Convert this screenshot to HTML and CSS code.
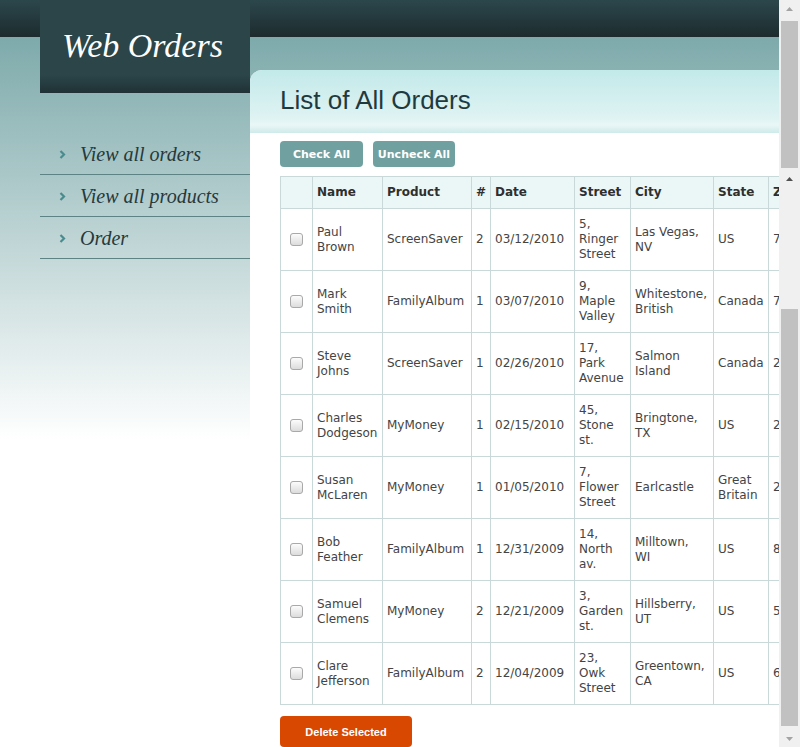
FILE: index.html
```html
<!DOCTYPE html>
<html>
<head>
<meta charset="utf-8">
<title>Web Orders</title>
<link rel="stylesheet" href="styles.css">
</head>
<body>
<div class="window">
  <div class="page">
    <aside class="sidebar">
      <div class="logo">Web Orders</div>
      <nav class="menu">
        <a class="menu-item"><svg class="chev" width="7" height="9" viewBox="0 0 7 9"><polyline points="1.5,1 5,4.5 1.5,8" fill="none" stroke="#4a8c8e" stroke-width="2.2"/></svg><span>View all orders</span></a>
        <a class="menu-item"><svg class="chev" width="7" height="9" viewBox="0 0 7 9"><polyline points="1.5,1 5,4.5 1.5,8" fill="none" stroke="#4a8c8e" stroke-width="2.2"/></svg><span>View all products</span></a>
        <a class="menu-item"><svg class="chev" width="7" height="9" viewBox="0 0 7 9"><polyline points="1.5,1 5,4.5 1.5,8" fill="none" stroke="#4a8c8e" stroke-width="2.2"/></svg><span>Order</span></a>
      </nav>
    </aside>
    <main class="panel">
      <div class="panel-head"><h1>List of All Orders</h1></div>
      <div class="panel-body">
        <div class="actions">
          <button class="btn btn-check">Check All</button>
          <button class="btn btn-uncheck">Uncheck All</button>
        </div>
        <table class="orders">
          <colgroup>
            <col class="c-box"><col class="c-name"><col class="c-prod"><col class="c-num"><col class="c-date"><col class="c-street"><col class="c-city"><col class="c-state"><col class="c-zip"><col class="c-card"><col class="c-cardnum"><col class="c-exp">
          </colgroup>
          <thead>
            <tr><th></th><th>Name</th><th>Product</th><th>#</th><th>Date</th><th>Street</th><th>City</th><th>State</th><th>Zip</th><th>Card</th><th>Card Number</th><th>Exp</th></tr>
          </thead>
          <tbody>
            <tr><td class="box"><input type="checkbox"></td><td>Paul Brown</td><td>ScreenSaver</td><td>2</td><td>03/12/2010</td><td>5, Ringer Street</td><td class="city">Las Vegas, NV</td><td>US</td><td>748</td><td>VISA</td><td>123456789012</td><td>08/12</td></tr>
            <tr><td class="box"><input type="checkbox"></td><td>Mark Smith</td><td>FamilyAlbum</td><td>1</td><td>03/07/2010</td><td>9, Maple Valley</td><td class="city">Whitestone, British</td><td>Canada</td><td>76743</td><td>MasterCard</td><td>770077007700</td><td>07/11</td></tr>
            <tr><td class="box"><input type="checkbox"></td><td>Steve Johns</td><td>ScreenSaver</td><td>1</td><td>02/26/2010</td><td>17, Park Avenue</td><td class="city">Salmon Island</td><td>Canada</td><td>21874</td><td>American Express</td><td>341341341341</td><td>03/11</td></tr>
            <tr><td class="box"><input type="checkbox"></td><td>Charles Dodgeson</td><td>MyMoney</td><td>1</td><td>02/15/2010</td><td>45, Stone st.</td><td class="city">Bringtone, TX</td><td>US</td><td>21445</td><td>MasterCard</td><td>505550555055</td><td>01/11</td></tr>
            <tr><td class="box"><input type="checkbox"></td><td>Susan McLaren</td><td>MyMoney</td><td>1</td><td>01/05/2010</td><td>7, Flower Street</td><td class="city">Earlcastle</td><td>Great Britain</td><td>23424</td><td>MasterCard</td><td>300155554444</td><td>01/12</td></tr>
            <tr><td class="box"><input type="checkbox"></td><td>Bob Feather</td><td>FamilyAlbum</td><td>1</td><td>12/31/2009</td><td>14, North av.</td><td class="city">Milltown, WI</td><td>US</td><td>81650</td><td>VISA</td><td>133395133395</td><td>04/10</td></tr>
            <tr><td class="box"><input type="checkbox"></td><td>Samuel Clemens</td><td>MyMoney</td><td>2</td><td>12/21/2009</td><td>3, Garden st.</td><td class="city">Hillsberry, UT</td><td>US</td><td>57665</td><td>VISA</td><td>800088880000</td><td>12/10</td></tr>
            <tr><td class="box"><input type="checkbox"></td><td>Clare Jefferson</td><td>FamilyAlbum</td><td>2</td><td>12/04/2009</td><td>23, Owk Street</td><td class="city">Greentown, CA</td><td>US</td><td>62658</td><td>American Express</td><td>371449635398</td><td>07/11</td></tr>
          </tbody>
        </table>
        <button class="btn btn-delete">Delete Selected</button>
      </div>
    </main>
  </div>
  <div class="scrollbar">
    <div class="sb-arrow"><svg width="7" height="4" viewBox="0 0 7 4"><polygon points="0,4 3.5,0 7,4" fill="#a3a3a3"/></svg></div>
    <div class="sb-thumb sb-thumb-top"></div>
    <div class="sb-arrow sb-arrow-inner"><svg width="7" height="4" viewBox="0 0 7 4"><polygon points="0,4 3.5,0 7,4" fill="#505050"/></svg></div>
    <div class="sb-track"></div>
    <div class="sb-thumb sb-thumb-main"></div>
    <div class="sb-arrow sb-arrow-down"><svg width="7" height="4" viewBox="0 0 7 4"><polygon points="0,0 3.5,4 7,0" fill="#a3a3a3"/></svg></div>
  </div>
</div>
</body>
</html>
```
FILE: styles.css
```css
html, body {
  margin: 0;
  padding: 0;
  overflow: hidden;
}

.window {
  display: flex;
  width: 800px;
  height: 747px;
}

.page {
  display: flex;
  width: 779px;
  height: 747px;
  overflow: hidden;
  padding-left: 40px;
  box-sizing: border-box;
  flex: none;
  background: linear-gradient(to bottom, #2c474c 0, #1d2b2e 37px, #7eaaab 37px, #ffffff 440px, #ffffff 100%);
}

.sidebar {
  width: 210px;
  flex: none;
}

.logo {
  height: 93px;
  box-sizing: border-box;
  padding: 26px 0 0 22px;
  background: linear-gradient(to bottom, #2b4549 0, #2b4549 75px, #203236 93px);
  color: #ffffff;
  font-family: "Liberation Serif", serif;
  font-style: italic;
  font-size: 34px;
  line-height: 40px;
}

.menu {
  margin-top: 40px;
}

.menu-item {
  display: flex;
  align-items: center;
  box-sizing: border-box;
  height: 42px;
  padding-top: 1px;
  border-bottom: 1px solid #5e8385;
  padding-left: 19px;
  gap: 14px;
  color: #26393c;
  font-family: "Liberation Serif", serif;
  font-style: italic;
  font-size: 20px;
  text-decoration: none;
}

.chev {
  flex: none;
}

.panel {
  flex: 1;
  min-width: 0;
  margin-top: 70px;
  background: #ffffff;
  border-top-left-radius: 12px;
  overflow: hidden;
}

.panel-head {
  height: 63px;
  box-sizing: border-box;
  padding: 15px 0 0 30px;
  background: linear-gradient(to bottom, #c3e9e9 0, #dff3f3 48px, #e9f7f7 55px, #cfeaea 63px);
}

.panel-head h1 {
  margin: 0;
  font-family: "Liberation Sans", Arial, sans-serif;
  font-weight: normal;
  font-size: 26px;
  line-height: 30px;
  color: #1f3a3e;
}

.panel-body {
  padding: 8px 0 0 30px;
}

.actions {
  display: flex;
  gap: 10px;
}

.btn {
  border: none;
  border-radius: 4px;
  color: #ffffff;
  font-family: "DejaVu Sans", Verdana, sans-serif;
  font-weight: bold;
  font-size: 11px;
  padding: 0;
  cursor: pointer;
}

.btn-check, .btn-uncheck {
  height: 26px;
  background: #70a0a0;
}

.btn-check { width: 83px; }
.btn-uncheck { width: 82px; }

.orders {
  margin-top: 9px;
  border-collapse: collapse;
  table-layout: fixed;
  width: 840px;
  font-family: "DejaVu Sans", Verdana, sans-serif;
  font-size: 12px;
  line-height: 15px;
  color: #444444;
}

.c-box { width: 32px; }
.c-name { width: 70px; }
.c-prod { width: 89px; }
.c-num { width: 19px; }
.c-date { width: 84px; }
.c-street { width: 56px; }
.c-city { width: 83px; }
.c-state { width: 55px; }
.c-zip { width: 60px; }
.c-card { width: 110px; }
.c-cardnum { width: 120px; }
.c-exp { width: 62px; }

.orders th, .orders td {
  border: 1px solid #c9d9d9;
  padding: 0 4px;
  text-align: left;
  vertical-align: middle;
  overflow: hidden;
}

.orders th {
  height: 31px;
  background: #ebf7f7;
  color: #2f2f2f;
  font-weight: bold;
}

.orders td {
  height: 61px;
}

.orders td.city {
  padding-right: 7px;
}

.orders td.box {
  text-align: center;
  padding: 0;
}

.orders input[type="checkbox"] {
  appearance: none;
  -webkit-appearance: none;
  width: 13px;
  height: 13px;
  margin: 0;
  border: 1px solid #a9a9a9;
  border-radius: 3px;
  background: linear-gradient(to bottom, #fcfcfc, #dcdcdc);
  vertical-align: middle;
  box-sizing: border-box;
}

.btn-delete {
  margin-top: 11px;
  width: 132px;
  height: 31px;
  background: #d94800;
  font-family: "Liberation Sans", Arial, sans-serif;
}

.scrollbar {
  width: 21px;
  flex: none;
  height: 747px;
  display: flex;
  flex-direction: column;
  background: #f0f0f0;
}

.sb-arrow {
  height: 17px;
  display: flex;
  align-items: center;
  justify-content: center;
  flex: none;
}

.sb-thumb {
  margin: 0 2px;
  background: #c1c1c1;
  flex: none;
}

.sb-thumb-top {
  margin-top: 4px;
  height: 147px;
}

.sb-arrow-inner {
  margin-top: 2px;
}

.sb-track {
  height: 122px;
  flex: none;
}

.sb-thumb-main {
  height: 417px;
}

.sb-arrow-down {
  margin-top: auto;
}
```
